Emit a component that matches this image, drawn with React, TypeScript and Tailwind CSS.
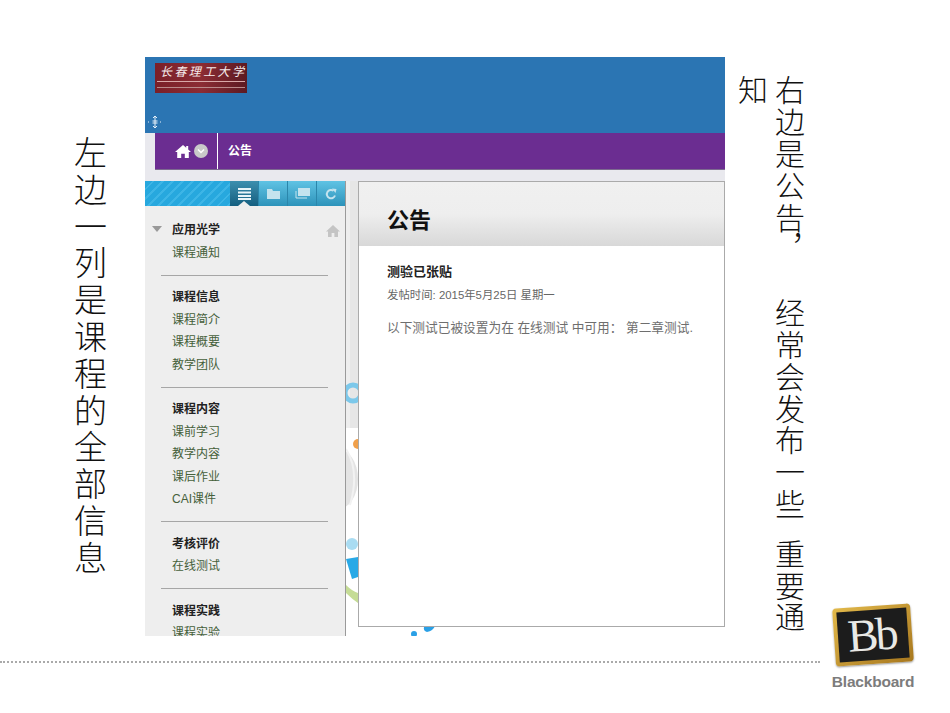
const sans = 'font-["Liberation_Sans","Noto_Sans_CJK_SC",sans-serif]';

const sections = [
  { head: '应用光学', links: ['课程通知'], home: true },
  { head: '课程信息', links: ['课程简介', '课程概要', '教学团队'] },
  { head: '课程内容', links: ['课前学习', '教学内容', '课后作业', 'CAI课件'] },
  { head: '考核评价', links: ['在线测试'] },
  { head: '课程实践', links: ['课程实验'] },
];

function Sidebar() {
  return (
    <aside className="w-[201px] shrink-0 bg-[#eeeeee] border-r border-[#9a9a9a] flex flex-col">
      <div className="h-[25px] flex shrink-0 bg-[repeating-linear-gradient(135deg,#27a8de_0px,#27a8de_5px,#3db5e6_5px,#3db5e6_7px)]">
        <div className="w-[85px]" />
        <div className="relative w-[28px] flex items-center justify-center bg-gradient-to-b from-[#3c8fae] to-[#145f80]">
          <svg width="13" height="12" viewBox="0 0 13 12" fill="#e8f4f8">
            <rect y="0" width="13" height="2" />
            <rect y="3.5" width="13" height="2" />
            <rect y="7" width="13" height="2" />
            <rect y="10" width="13" height="2" />
          </svg>
          <div className="absolute bottom-0 left-[8px] w-0 h-0 border-x-[6px] border-x-transparent border-b-[5px] border-b-[#eeeeee]" />
        </div>
        {[0, 1, 2].map((i) => (
          <div key={i} className="w-[29px] flex items-center justify-center border-l border-[#2b86ab] bg-gradient-to-b from-[#5fc3e4] to-[#2c93ba]">
            {i === 0 && (
              <svg width="13" height="10" viewBox="0 0 13 10" fill="#c4e3ee">
                <path d="M0 0h5l1 2h7v8H0z" />
              </svg>
            )}
            {i === 1 && (
              <svg width="15" height="11" viewBox="0 0 15 11" fill="none">
                <rect x="3" y="0" width="12" height="8" fill="#c4e3ee" />
                <path d="M1 3v7h11" stroke="#c4e3ee" strokeWidth="1" />
              </svg>
            )}
            {i === 2 && (
              <svg width="12" height="12" viewBox="0 0 12 12" fill="none">
                <path d="M10 7.5A4.2 4.2 0 1 1 8.6 2.8" stroke="#c4e3ee" strokeWidth="2" />
                <path d="M7 0.5l4.5 0.5-1 4z" fill="#c4e3ee" />
              </svg>
            )}
          </div>
        ))}
      </div>
      <div className="pt-[13px] text-[12px] leading-[22.5px]">
        {sections.map((s, i) => (
          <div key={s.head}>
            {i > 0 && <div className="h-px bg-[#a6a6a6] ml-[16px] mr-[17px] my-[10.5px]" />}
            <div className="relative pl-[27px] font-bold text-[#222222]">
              {s.home && (
                <>
                  <div className="absolute left-[7px] top-[7px] w-0 h-0 border-x-[5px] border-x-transparent border-t-[6px] border-t-[#999999]" />
                  <svg className="absolute right-[5px] top-[6px]" width="14" height="12" viewBox="0 0 14 12" fill="#c4c4c4">
                    <path d="M7 0L0 6.5h2V12h3.6V8h2.8v4H12V6.5h2z" />
                  </svg>
                </>
              )}
              {s.head}
            </div>
            {s.links.map((l) => (
              <div key={l} className="pl-[27px] text-[#45603a]">{l}</div>
            ))}
          </div>
        ))}
      </div>
    </aside>
  );
}

function Screenshot() {
  return (
    <div className={`w-[580px] h-[579px] shrink-0 overflow-hidden flex flex-col bg-[#e9e9ee] ${sans}`}>
      <header className="h-[76px] shrink-0 bg-[#2b75b3] pl-[10px] pt-[6px] relative">
        <div className="w-[92px] h-[30px] bg-gradient-to-r from-[#7a1f28] via-[#8c2c34] to-[#5c1a22]">
          <div className="text-[12px] leading-[14px] tracking-[2.4px] text-[#f4eaea] italic pl-[5px] pt-[1px] font-['Noto_Sans_CJK_SC',sans-serif] whitespace-nowrap">长春理工大学</div>
          <div className="h-px bg-[#d9a8a8] mt-[3px] mx-[2px]" />
          <div className="h-px bg-[#b98a8a] mt-[5px] mx-[2px]" />
        </div>
        <svg className="absolute left-[3px] bottom-[4px]" width="14" height="14" viewBox="0 0 14 14" fill="none" stroke="#e6f0f8" strokeWidth="1">
          <path d="M7 1v12M5 3l2-2 2 2M5 11l2 2 2-2M4.5 6h5M4.5 8h5" />
          <path d="M0 7h2M12 7h2" strokeDasharray="1 1" />
        </svg>
      </header>
      <div className="h-[37px] shrink-0 ml-[10px] bg-[#6b2d91] border-b border-[#7d6a90] flex items-center">
        <div className="w-[63px] h-full border-r border-white flex items-center justify-end gap-[3px] pr-[9px]">
          <svg width="16" height="13" viewBox="0 0 16 13" fill="white">
            <path d="M8 0L0 7h2.2v6h4V8.8h3.6V13h4V7H16l-2.8-2.4V1h-2v1.8z" />
          </svg>
          <div className="w-[14px] h-[14px] rounded-full bg-[#c9c9c9] flex items-center justify-center">
            <svg width="8" height="6" viewBox="0 0 8 6" fill="none" stroke="white" strokeWidth="1.5">
              <path d="M1 1.5l3 3 3-3" />
            </svg>
          </div>
        </div>
        <span className="ml-[10px] text-[12px] font-bold text-white">公告</span>
      </div>
      <div className="h-[11px] shrink-0" />
      <div className="flex flex-1 min-h-0">
        <Sidebar />
        <div className="relative flex-1 min-w-0 bg-white">
          <svg className="absolute inset-0" width="379" height="456" viewBox="0 0 379 456">
            <rect x="0" y="0" width="379" height="247" fill="#e6e6e6" />
            <rect x="0" y="0" width="4" height="247" fill="#eeeeee" />
            <circle cx="7" cy="212" r="8" fill="none" stroke="#7cc8ea" strokeWidth="5" />
            <circle cx="12" cy="263" r="5" fill="#f0a04b" />
            <ellipse cx="-8" cy="298" rx="20" ry="30" fill="#e4e4e4" />
            <path d="M0 268Q14 290 4 324" fill="none" stroke="#f2f2f2" strokeWidth="2" />
            <circle cx="6" cy="363" r="6" fill="#a9dcf2" />
            <path d="M0 378L12 376V396L6 398z" fill="#29a9e6" />
            <path d="M0 404Q6 410 12 412V422Q6 418 0 412z" fill="#c5dc96" />
            <path d="M78 446q6 -2 8 -4l3 3q-2 5 -8 6q-4 -1 -3 -5z" fill="#2aa0e6" />
            <circle cx="68" cy="453" r="3" fill="#2aa0e6" />
          </svg>
          <main className="relative ml-[12px] h-[446px] bg-white border border-[#aaaaaa]">
            <div className="h-[64px] pl-[28px] flex items-center pt-[12px] bg-gradient-to-b from-[#f0f0f0] via-[#eeeeee] to-[#d8d8d8]">
              <h1 className="text-[22px] font-bold text-[#111111]">公告</h1>
            </div>
            <div className="pl-[28px] pt-[17px]">
              <h2 className="text-[13px] leading-[18px] font-bold text-[#222222]">测验已张贴</h2>
              <p className="mt-[5px] text-[11.4px] leading-[18px] text-[#666666]">发帖时间: 2015年5月25日 星期一</p>
              <p className="mt-[15px] text-[12.7px] leading-[18px] text-[#6e6e6e] whitespace-nowrap">以下测试已被设置为在 在线测试 中可用： 第二章测试.</p>
            </div>
          </main>
        </div>
      </div>
    </div>
  );
}

function BlackboardLogo() {
  return (
    <div className="absolute left-[826px] top-[606px] w-[94px] flex flex-col items-center">
      <div className="w-[78px] h-[58px] -rotate-[4deg] rounded-[4px] bg-gradient-to-br from-[#e2b94a] to-[#a8781e] p-[4px] shadow-[0_1px_2px_#999]">
        <div className="h-full bg-[#1c1c1c] flex items-center justify-center">
          <span className="font-['Liberation_Serif',serif] text-[46px] leading-[46px] tracking-[-3px] text-[#e9e9e6] pr-[3px]">Bb</span>
        </div>
      </div>
      <span className="mt-[9px] font-['Liberation_Sans',sans-serif] font-bold text-[15.5px] leading-[18px] text-[#7c7c7c] tracking-[-0.2px]">Blackboard</span>
    </div>
  );
}

export default function App() {
  const slideFont = "font-['Noto_Sans_CJK_SC',serif] font-light text-[#111111] [writing-mode:vertical-rl] whitespace-pre";
  return (
    <div className="relative w-[950px] h-[713px] bg-white overflow-hidden">
      <div className="flex pt-[57px] h-[661px]">
        <div className="w-[145px] shrink-0 flex justify-center pl-[36px] pt-[79px]">
          <div className={`${slideFont} text-[33px] leading-[36px] tracking-[3.8px]`}>左边一列是课程的全部信息</div>
        </div>
        <Screenshot />
        <div className={`${slideFont} ml-[9px] mt-[18px] text-[30px] leading-[37px] tracking-[1.8px]`}>
          右边是公告，
          <span className="inline-block h-[32px]" />
          经常会发布一些
          <span className="inline-block h-[18px]" />
          重要通
          <br />
          知
        </div>
      </div>
      <div className="w-[820px] border-t-2 border-dotted border-[#aaaaaa]" />
      <BlackboardLogo />
    </div>
  );
}
